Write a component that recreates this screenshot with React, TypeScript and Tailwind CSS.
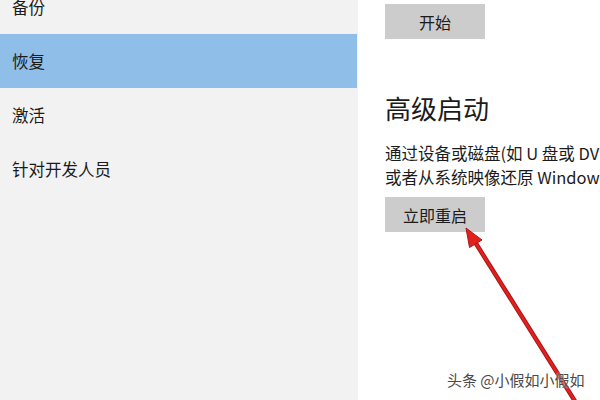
import React from "react";

const navItems = ["备份", "恢复", "激活", "针对开发人员"];

function Arrow() {
  return (
    <svg
      className="absolute inset-0 pointer-events-none"
      width={600}
      height={400}
      viewBox="0 0 600 400"
    >
      <line x1="475" y1="242" x2="578" y2="406" stroke="#a8141a" strokeWidth="4.5" />
      <line x1="475" y1="242" x2="578" y2="406" stroke="#e3211c" strokeWidth="2.5" />
      <polygon points="466,228 482,240 469.5,247.5" fill="#e3211c" stroke="#b0151a" strokeWidth="1" />
    </svg>
  );
}

export default function App() {
  return (
    <div
      className="relative w-[600px] h-[400px] overflow-hidden flex bg-white"
      style={{ fontFamily: '"Noto Sans CJK SC", "Noto Sans", sans-serif' }}
    >
      {/* Sidebar */}
      <aside className="w-[358px] shrink-0 bg-[#f2f2f2]">
        <ul className="mt-[-20px]">
          {navItems.map((label) => (
            <li
              key={label}
              className={
                "h-[54px] flex items-center pl-3 text-[16.5px] text-[#1b1b1b] " +
                (label === "恢复" ? "bg-[#8fbee8] mr-px" : "")
              }
            >
              {label}
            </li>
          ))}
        </ul>
      </aside>

      {/* Content */}
      <main className="flex-1 min-w-0 pl-[27px] pt-1 text-[#1b1b1b]">
        <button className="w-[100px] h-[35px] bg-[#cccccc] text-[16px] text-[#1b1b1b] flex items-center justify-center">
          开始
        </button>

        <h2 className="mt-[52px] text-[26px] leading-[34px]">高级启动</h2>

        <div className="mt-[16px] text-[16.5px] leading-[24px] whitespace-nowrap">
          <p>通过设备或磁盘(如 U 盘或 DVD)启动</p>
          <p>或者从系统映像还原 Windows</p>
        </div>

        <button className="mt-[8px] w-[100px] h-[35px] bg-[#cccccc] text-[16px] text-[#1b1b1b] flex items-center justify-center">
          立即重启
        </button>
      </main>

      <Arrow />

      <div className="absolute left-[447px] top-[370px] text-[15px] leading-[20px] text-[#4a4a4a] [text-shadow:0_0_2px_#ffffff] whitespace-nowrap">
        头条 @小假如小假如
      </div>
    </div>
  );
}
